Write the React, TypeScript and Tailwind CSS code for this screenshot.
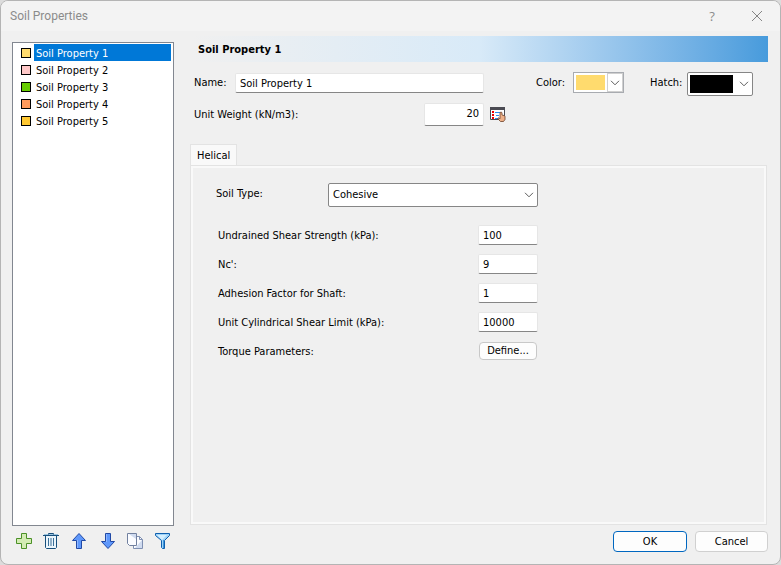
import { useState } from 'react';
import type { ReactNode } from 'react';

interface Soil {
  id: number;
  name: string;
  color: string;
}

interface Field {
  id: string;
  label: string;
  value: string;
}

const initialSoils: Soil[] = [
  { id: 1, name: 'Soil Property 1', color: '#ffdb6e' },
  { id: 2, name: 'Soil Property 2', color: '#ffc8c8' },
  { id: 3, name: 'Soil Property 3', color: '#66cc00' },
  { id: 4, name: 'Soil Property 4', color: '#ff9a5c' },
  { id: 5, name: 'Soil Property 5', color: '#ffc832' },
];

const fields: Field[] = [
  { id: 'shear-strength', label: 'Undrained Shear Strength (kPa):', value: '100' },
  { id: 'nc', label: "Nc':", value: '9' },
  { id: 'adhesion', label: 'Adhesion Factor for Shaft:', value: '1' },
  { id: 'shear-limit', label: 'Unit Cylindrical Shear Limit (kPa):', value: '10000' },
];

const inputStyle =
  'border border-[#e6e6e6] border-b-[#868686] rounded-xs bg-white px-1 outline-none focus:border-b-[#0067c0]';

const buttonStyle = 'rounded border bg-[#fdfdfd] text-center hover:bg-[#e5f1fb]';

const Chevron = () => (
  <svg width="10" height="6" viewBox="0 0 10 6" fill="none" stroke="#5c5c5c" aria-hidden="true">
    <path d="M1 .8 5 4.8 9 .8" />
  </svg>
);

const PlusIcon = () => (
  <svg width="18" height="18" viewBox="0 0 18 18" aria-hidden="true">
    <path d="M7.5 1.5h5v5h5v5h-5v5h-5v-5h-5v-5h5z" fill="#d3ecb4" stroke="#4b9127" />
  </svg>
);

const TrashIcon = () => (
  <svg width="18" height="18" viewBox="0 0 18 18" aria-hidden="true">
    <path d="M3.5 3.5h11v12l-1 1h-9l-1-1z" fill="#eaf5fc" stroke="#174f7c" />
    <path d="M1 3.5h16" stroke="#174f7c" />
    <path d="M2 2.5h14" stroke="#9cc4de" />
    <path d="M6.5 2.5v-1h5v1" fill="none" stroke="#174f7c" />
    <path d="M6.5 6v8M9 6v8M11.5 6v8" stroke="#3b6f98" />
  </svg>
);

const ArrowIcon = ({ down = false }: { down?: boolean }) => (
  <svg width="18" height="18" viewBox="0 0 18 18" aria-hidden="true">
    <path
      d={down ? 'M7.5 1.5h5v8h4L10 16.5 3.5 9.5h4z' : 'M6.5 16.5h5v-8h4L9 1.5 2.5 8.5h4z'}
      fill="#5f98fb"
      stroke="#2149a5"
    />
    <path d={down ? 'M8.5 2v8' : 'M7.5 16V8'} stroke="#8db6ff" />
  </svg>
);

const CopyIcon = () => (
  <svg width="18" height="18" viewBox="0 0 18 18" aria-hidden="true">
    <path d="M7.5 4.5h6l3 3v9h-9z" fill="#fbfcff" stroke="#8090b2" />
    <path d="M16 8v8H9z" fill="#d0dbef" />
    <path d="M13.5 4.5v3h3" fill="none" stroke="#8090b2" />
    <path d="M1.5 1.5h9v12h-7l-2-2z" fill="#fbfcff" stroke="#71809f" />
    <path d="M10 2v5L3 2z" fill="#d0dbef" />
  </svg>
);

const FilterIcon = () => (
  <svg width="18" height="18" viewBox="0 0 18 18" aria-hidden="true">
    <path d="M1.5 1.5h14v2l-5 5v8h-2l-1-1v-7l-6-5z" fill="#9fd4f8" stroke="#0f5fae" />
    <path d="M3 3h10L8 8z" fill="#d5efff" />
    <path d="M9.5 8v8" stroke="#3f96dc" />
  </svg>
);

const PickIcon = () => (
  <svg width="17" height="16" viewBox="0 0 17 16" aria-hidden="true">
    <path d="M.5 1.5h14v11H.5z" fill="#fff" stroke="#4a4a52" />
    <path d="M0 0h15v3H0z" fill="#4a4a52" />
    <path d="M2 4h2v2H2zM2 7h2v2H2zM2 10h2v2H2z" fill="#f00000" />
    <path d="M5 5.5h6M6 8.5h3M5 11.5h3" stroke="#2f8cf0" />
    <path
      d="M10 6c0-1.2 2-1.2 2 0v2l2 .5 1 1v3l-1.500 2h-3L8 12c-.5-1 .4-1.500 1.200-.8l.8.6z"
      fill="#eeb088"
      stroke="#6a4028"
      strokeWidth=".8"
    />
  </svg>
);

const toolbar: { label: string; icon: ReactNode }[] = [
  { label: 'Add', icon: <PlusIcon /> },
  { label: 'Delete', icon: <TrashIcon /> },
  { label: 'Move up', icon: <ArrowIcon /> },
  { label: 'Move down', icon: <ArrowIcon down /> },
  { label: 'Duplicate', icon: <CopyIcon /> },
  { label: 'Filter', icon: <FilterIcon /> },
];

const TitleBar = () => (
  <header className="flex h-[30px] items-center bg-[#f3f3f3] pr-[15px] pl-[9px] text-[#8b8b8b]">
    <h1 className="flex-1 font-['Roboto',sans-serif] text-[12px]">Soil Properties</h1>
    <button type="button" aria-label="Help" className="mr-[29px] w-4 font-['Open_Sans',sans-serif] text-[13px]">
      ?
    </button>
    <button type="button" aria-label="Close" className="flex w-4 justify-center">
      <svg width="12" height="12" viewBox="0 0 12 12" stroke="#858585" aria-hidden="true">
        <path d="M1 1l10 10M11 1 1 11" />
      </svg>
    </button>
  </header>
);

export default function App() {
  const [soils, setSoils] = useState(initialSoils);
  const [selectedId, setSelectedId] = useState(1);

  const selected = soils.find((soil) => soil.id === selectedId) ?? soils[0];

  const update = (changes: Partial<Soil>) => {
    setSoils(soils.map((soil) => (soil.id === selectedId ? { ...soil, ...changes } : soil)));
  };

  return (
    <div className="flex min-h-screen bg-[#dcdcdc] font-['DejaVu_Sans_Condensed','Noto_Sans',sans-serif] text-[11px] leading-4 text-black">
      <div className="flex flex-1 flex-col overflow-hidden rounded-lg border border-[#b4b4b4] bg-[#f0f0f0]">
        <TitleBar />

        <div className="flex flex-1 pr-3 pl-[11px]">
          {/* Soil list */}
          <aside className="mt-[11px] flex w-[162px] flex-col">
            <ul aria-label="Soils" className="flex-1 border border-[#828790] bg-white p-px pr-0.5">
              {soils.map((soil) => (
                <li key={soil.id}>
                  <button
                    type="button"
                    aria-pressed={soil.id === selectedId}
                    onClick={() => setSelectedId(soil.id)}
                    className="flex h-[17px] w-full items-center gap-[3px] pl-[7px] text-left"
                  >
                    <span className="size-2.5 border border-black" style={{ backgroundColor: soil.color }} />
                    <span
                      className={
                        soil.id === selectedId
                          ? 'flex-1 bg-[#0078d7] pt-0.5 pl-0.5 leading-[15px] text-white'
                          : 'flex-1 pt-0.5 pl-0.5 leading-[15px]'
                      }
                    >
                      {soil.name}
                    </span>
                  </button>
                </li>
              ))}
            </ul>
            <div className="flex h-[38px] items-start gap-[10px] pt-1.5 pl-0.5">
              {toolbar.map((tool) => (
                <button key={tool.label} type="button" aria-label={tool.label}>
                  {tool.icon}
                </button>
              ))}
            </div>
          </aside>

          {/* Selected soil */}
          <main className="mt-[5px] ml-4 flex min-w-0 flex-1 flex-col">
            <h2 className="ml-0.5 bg-linear-to-r from-[#f0f0f0] via-[#d8eaf8] to-[#479bdc] px-1.5 pt-0.5 font-bold leading-6">
              {selected.name}
            </h2>

            <div className="mt-2.5 flex items-start pr-[15px] pl-1">
              <label htmlFor="name" className="w-[41px] pt-[3px]">
                Name:
              </label>
              <div className="min-w-0 flex-1 pt-px">
                <input
                  id="name"
                  value={selected.name}
                  onChange={(e) => update({ name: e.target.value })}
                  className={`${inputStyle} h-5 w-full`}
                />
              </div>
              <label htmlFor="color" className="w-[89px] shrink-0 pt-[3px] pl-[52px]">
                Color:
              </label>
              <div className="relative h-[21px] w-[51px] border border-[#a8abb0] bg-white">
                <select
                  id="color"
                  value={selected.color}
                  onChange={(e) => update({ color: e.target.value })}
                  className="h-full w-full appearance-none text-transparent outline-none"
                >
                  {initialSoils.map((soil) => (
                    <option key={soil.id} value={soil.color}>
                      {soil.color}
                    </option>
                  ))}
                </select>
                <div className="pointer-events-none absolute inset-0 flex">
                  <span className="m-0.5 flex-1" style={{ backgroundColor: selected.color }} />
                  <span className="flex w-4 items-center justify-center border border-[#d0d0d0]">
                    <Chevron />
                  </span>
                </div>
              </div>
              <label htmlFor="hatch" className="w-[63px] shrink-0 pt-[3px] pl-[26px]">
                Hatch:
              </label>
              <div className="relative h-6 w-[66px] rounded-xs border border-[#868686] bg-white">
                <select id="hatch" className="h-full w-full appearance-none text-transparent outline-none">
                  <option>Solid</option>
                </select>
                <div className="pointer-events-none absolute inset-0 flex items-center gap-1.5 p-0.5">
                  <span className="h-[18px] w-[43px] bg-black" />
                  <Chevron />
                </div>
              </div>
            </div>

            <div className="mt-[7px] flex items-center pl-1">
              <label htmlFor="unit-weight" className="w-[230px]">
                Unit Weight (kN/m3):
              </label>
              <input
                id="unit-weight"
                defaultValue="20"
                className={`${inputStyle} h-[23px] w-[60px] pb-0.5 text-right`}
              />
              <button type="button" aria-label="Pick unit weight" className="ml-1.5">
                <PickIcon />
              </button>
            </div>

            <div role="tablist" className="mt-[18px] flex">
              <button
                type="button"
                role="tab"
                id="helical-tab"
                aria-selected="true"
                aria-controls="helical"
                className="h-[21px] border border-b-0 border-[#e3e3e3] bg-[#f9f9f9] px-1.5 pt-0.5"
              >
                Helical
              </button>
            </div>
            <section
              id="helical"
              role="tabpanel"
              aria-labelledby="helical-tab"
              className="mr-px flex-1 border border-[#e3e3e3] bg-[#f9f9f9] p-0.5"
            >
              <div className="h-full bg-[#f0f0f0] pt-[15px] pl-[23px]">
                <div className="flex">
                  <label htmlFor="soil-type" className="w-28 pt-[3px]">
                    Soil Type:
                  </label>
                  <div className="relative">
                    <select
                      id="soil-type"
                      className="h-6 w-[210px] appearance-none rounded-xs border border-[#868686] bg-white px-1 outline-none"
                    >
                      <option>Cohesive</option>
                      <option>Cohesionless</option>
                    </select>
                    <span className="pointer-events-none absolute inset-y-0 right-1 flex items-center">
                      <Chevron />
                    </span>
                  </div>
                </div>

                <div className="mt-[18px] flex flex-col gap-[9px] pl-0.5">
                  {fields.map((field) => (
                    <div key={field.id} className="flex h-5 items-center">
                      <label htmlFor={field.id} className="w-[260px] pt-0.5">
                        {field.label}
                      </label>
                      <input id={field.id} defaultValue={field.value} className={`${inputStyle} h-5 w-[60px]`} />
                    </div>
                  ))}
                  <div className="flex h-5 items-center">
                    <span className="w-[261px] pt-0.5">Torque Parameters:</span>
                    <button
                      type="button"
                      className={`${buttonStyle} h-[18px] w-[58px] border-[#c8c8c8]`}
                    >
                      Define...
                    </button>
                  </div>
                </div>
              </div>
            </section>

            <footer className="flex h-[39px] items-start justify-end gap-2 pt-1.5">
              <button type="button" className={`${buttonStyle} h-[21px] w-[74px] border-[#0067c0]`}>
                OK
              </button>
              <button type="button" className={`${buttonStyle} h-[21px] w-[73px] border-[#d0d0d0]`}>
                Cancel
              </button>
            </footer>
          </main>
        </div>
      </div>
    </div>
  );
}
